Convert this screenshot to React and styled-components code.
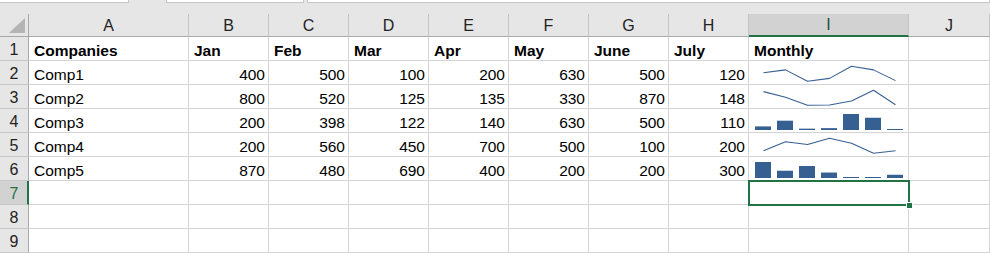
import React from "react";
import styled, { createGlobalStyle, css } from "styled-components";

const Global = createGlobalStyle`
  html, body { margin: 0; padding: 0; background: #ffffff; overflow: hidden; }
  body { font-family: "Liberation Sans", Arial, sans-serif; }
`;

const GREEN = "#217346";
const SPARK = "#376092";
const COLS = [
  { id: "A", w: 160 },
  { id: "B", w: 80 },
  { id: "C", w: 80 },
  { id: "D", w: 80 },
  { id: "E", w: 80 },
  { id: "F", w: 80 },
  { id: "G", w: 80 },
  { id: "H", w: 80 },
  { id: "I", w: 160 },
  { id: "J", w: 81 },
];

const Page = styled.div`
  width: 990px;
  height: 253px;
  display: flex;
  flex-direction: column;
  background: #e6e6e6;
`;

const Toolbar = styled.div`
  height: 14px;
  display: flex;
  align-items: flex-start;
  background: #e6e6e6;
  flex: none;
`;

const Box = styled.div`
  height: 3px;
  width: ${(p) => p.$w}px;
  margin-left: ${(p) => p.$gap || 0}px;
  background: #ffffff;
  box-sizing: border-box;
  border-bottom: 1px solid #c6c6c6;
  border-left: ${(p) => (p.$gap ? "1px solid #c6c6c6" : "none")};
  border-right: 1px solid #c6c6c6;
  flex: ${(p) => (p.$grow ? "1" : "none")};
`;

const Sheet = styled.div`
  display: grid;
  grid-template-columns: 29px ${COLS.map((c) => c.w + "px").join(" ")};
  grid-template-rows: 23px repeat(9, 24px);
  background: #ffffff;
  flex: none;
`;

const Corner = styled.div`
  background: #e6e6e6;
  box-sizing: border-box;
  border-right: 1px solid #a9a9a9;
  border-bottom: 1px solid #a9a9a9;
  display: flex;
  align-items: flex-end;
  justify-content: flex-end;
  padding: 0 3px 3px 0;
`;

const ColHead = styled.div`
  background: ${(p) => (p.$active ? "#d2d2d2" : "#e6e6e6")};
  box-sizing: border-box;
  border-right: 1px solid #c3c3c3;
  border-bottom: ${(p) => (p.$active ? `2px solid ${GREEN}` : "1px solid #a9a9a9")};
  display: flex;
  align-items: center;
  justify-content: center;
  font-size: 16px;
  color: ${(p) => (p.$active ? "#1e4e35" : "#222222")};
  padding-top: 1px;
`;

const RowHead = styled.div`
  background: ${(p) => (p.$active ? "#d2d2d2" : "#e6e6e6")};
  box-sizing: border-box;
  border-bottom: 1px solid #c8c8c8;
  border-right: ${(p) => (p.$active ? `2px solid ${GREEN}` : "1px solid #a9a9a9")};
  display: flex;
  align-items: flex-end;
  justify-content: center;
  padding-bottom: 1px;
  padding-left: ${(p) => (p.$active ? "1px" : "0")};
  font-size: 16px;
  line-height: 18px;
  color: ${(p) => (p.$active ? GREEN : "#222222")};
`;

const Cell = styled.div`
  position: relative;
  box-sizing: border-box;
  border-right: 1px solid #d4d4d4;
  border-bottom: 1px solid #d4d4d4;
  display: flex;
  align-items: flex-end;
  justify-content: ${(p) => (p.$num ? "flex-end" : "flex-start")};
  padding: 0 3px 1px 5px;
  font-size: 15.5px;
  line-height: 17px;
  color: #000000;
  white-space: nowrap;
  ${(p) =>
    p.$bold &&
    css`
      font-weight: bold;
    `}
`;

const SparkCell = styled(Cell)`
  padding: 0;
  align-items: stretch;
`;

const Selection = styled.div`
  position: absolute;
  left: -1px;
  top: -1px;
  right: -2px;
  bottom: -2px;
  border: 2px solid ${GREEN};
  pointer-events: none;
  z-index: 2;
`;

const Handle = styled.div`
  position: absolute;
  right: -5px;
  bottom: -5px;
  width: 5px;
  height: 5px;
  background: ${GREEN};
  border: 1px solid #ffffff;
`;

const headers = ["Companies", "Jan", "Feb", "Mar", "Apr", "May", "June", "July", "Monthly"];

const data = [
  { name: "Comp1", v: [400, 500, 100, 200, 630, 500, 120], type: "line" },
  { name: "Comp2", v: [800, 520, 125, 135, 330, 870, 148], type: "line" },
  { name: "Comp3", v: [200, 398, 122, 140, 630, 500, 110], type: "bar" },
  { name: "Comp4", v: [200, 560, 450, 700, 500, 100, 200], type: "line" },
  { name: "Comp5", v: [870, 480, 690, 400, 200, 200, 300], type: "bar" },
];

function Sparkline({ values, type }) {
  const min = Math.min(...values);
  const max = Math.max(...values);
  const r = max - min || 1;
  if (type === "line") {
    const pts = values
      .map((v, i) => `${14.5 + 22 * i},${(20.2 - ((v - min) / r) * 15).toFixed(2)}`)
      .join(" ");
    return (
      <svg width="159" height="23" viewBox="0 0 159 23">
        <polyline points={pts} fill="none" stroke={SPARK} strokeWidth="1.1" strokeLinejoin="round" />
      </svg>
    );
  }
  return (
    <svg width="159" height="23" viewBox="0 0 159 23">
      {values.map((v, i) => {
        const h = 1 + ((v - min) / r) * 15;
        return <rect key={i} x={6 + 22 * i} y={21 - h} width="16" height={h} fill={SPARK} />;
      })}
    </svg>
  );
}

export default function App() {
  const emptyCols = COLS.map((c) => c.id);
  return (
    <Page>
      <Global />
      <Toolbar>
        <Box $w={129} />
        <Box $w={138} $gap={37} />
        <Box $gap={3} $grow />
      </Toolbar>
      <Sheet>
        <Corner>
          <svg width="16" height="15" viewBox="0 0 16 15">
            <polygon points="16,0 16,15 0,15" fill="#b4b4b4" />
          </svg>
        </Corner>
        {COLS.map((c) => (
          <ColHead key={c.id} $active={c.id === "I"}>
            {c.id}
          </ColHead>
        ))}

        <RowHead>1</RowHead>
        {headers.map((h) => (
          <Cell key={h} $bold>
            {h}
          </Cell>
        ))}
        <Cell />

        {data.map((row, ri) => (
          <React.Fragment key={row.name}>
            <RowHead>{ri + 2}</RowHead>
            <Cell>{row.name}</Cell>
            {row.v.map((v, i) => (
              <Cell key={i} $num>
                {v}
              </Cell>
            ))}
            <SparkCell>
              <Sparkline values={row.v} type={row.type} />
            </SparkCell>
            <Cell />
          </React.Fragment>
        ))}

        {[7, 8, 9].map((n) => (
          <React.Fragment key={n}>
            <RowHead $active={n === 7}>{n}</RowHead>
            {emptyCols.map((id) => (
              <Cell key={id}>
                {n === 7 && id === "I" && (
                  <Selection>
                    <Handle />
                  </Selection>
                )}
              </Cell>
            ))}
          </React.Fragment>
        ))}
      </Sheet>
    </Page>
  );
}
